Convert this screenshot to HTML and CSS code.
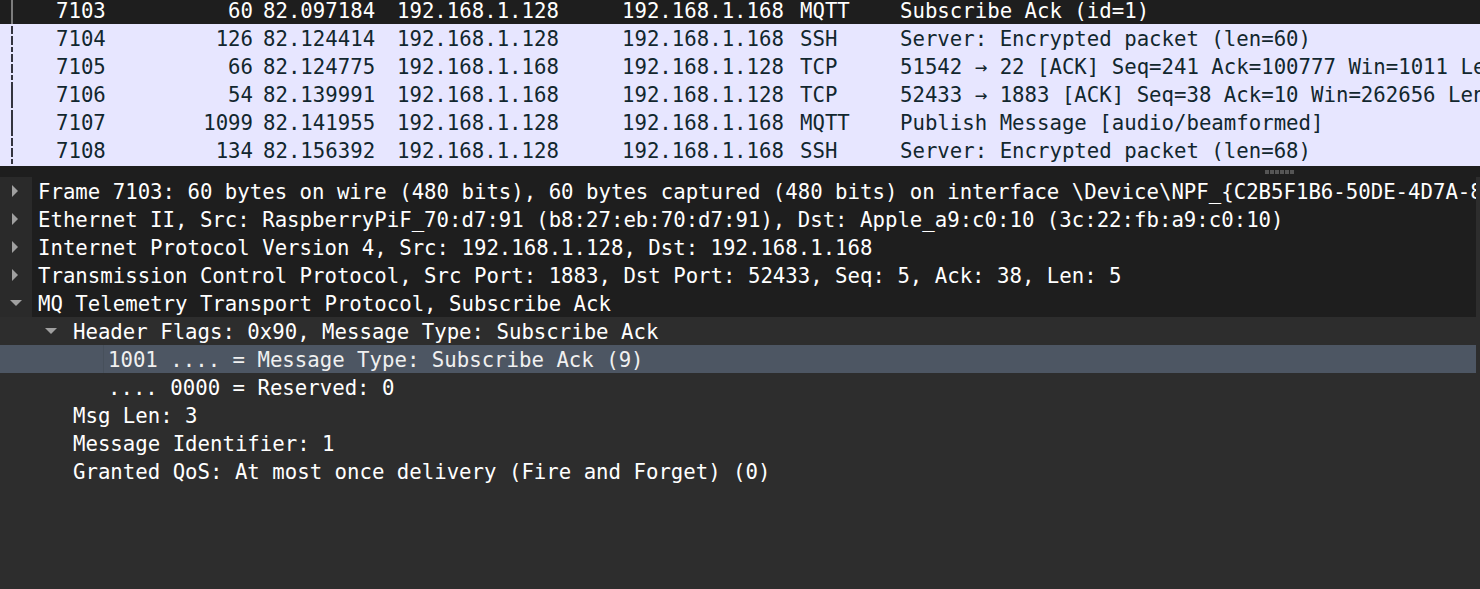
FILE: index.html
```html
<!DOCTYPE html>
<html>
<head>
<meta charset="utf-8">
<link rel="stylesheet" href="styles.css">
</head>
<body>
<div class="packets">
  <div class="plist">
    <div class="prow sel"><span class="rel"></span><span>7103</span><span class="len">60</span><span class="time">82.097184</span><span>192.168.1.128</span><span>192.168.1.168</span><span>MQTT</span><span class="info">Subscribe Ack (id=1)</span></div>
    <div class="prow tcp"><span class="rel dash"></span><span>7104</span><span class="len">126</span><span class="time">82.124414</span><span>192.168.1.128</span><span>192.168.1.168</span><span>SSH</span><span class="info">Server: Encrypted packet (len=60)</span></div>
    <div class="prow tcp"><span class="rel dash"></span><span>7105</span><span class="len">66</span><span class="time">82.124775</span><span>192.168.1.168</span><span>192.168.1.128</span><span>TCP</span><span class="info">51542 → 22 [ACK] Seq=241 Ack=100777 Win=1011 Len=0</span></div>
    <div class="prow tcp"><span class="rel"></span><span>7106</span><span class="len">54</span><span class="time">82.139991</span><span>192.168.1.168</span><span>192.168.1.128</span><span>TCP</span><span class="info">52433 → 1883 [ACK] Seq=38 Ack=10 Win=262656 Len=0</span></div>
    <div class="prow tcp"><span class="rel"></span><span>7107</span><span class="len">1099</span><span class="time">82.141955</span><span>192.168.1.128</span><span>192.168.1.168</span><span>MQTT</span><span class="info">Publish Message [audio/beamformed]</span></div>
    <div class="prow tcp"><span class="rel dash"></span><span>7108</span><span class="len">134</span><span class="time">82.156392</span><span>192.168.1.128</span><span>192.168.1.168</span><span>SSH</span><span class="info">Server: Encrypted packet (len=68)</span></div>
    <div class="prow tcp"><span class="rel"></span><span></span><span class="len"></span><span class="time"></span><span></span><span></span><span></span><span class="info"></span></div>
  </div>
</div>
<div class="splitter">
  <div class="grip"><i></i><i></i><i></i><i></i><i></i><i></i></div>
</div>
<div class="details">
  <div class="row top"><span class="twisty"><i class="tri right"></i></span><span class="label">Frame 7103: 60 bytes on wire (480 bits), 60 bytes captured (480 bits) on interface \Device\NPF_{C2B5F1B6-50DE-4D7A-8F2A-1C0E5B3D9A77}, id 0</span></div>
  <div class="row top"><span class="twisty"><i class="tri right"></i></span><span class="label">Ethernet II, Src: RaspberryPiF_70:d7:91 (b8:27:eb:70:d7:91), Dst: Apple_a9:c0:10 (3c:22:fb:a9:c0:10)</span></div>
  <div class="row top"><span class="twisty"><i class="tri right"></i></span><span class="label">Internet Protocol Version 4, Src: 192.168.1.128, Dst: 192.168.1.168</span></div>
  <div class="row top"><span class="twisty"><i class="tri right"></i></span><span class="label">Transmission Control Protocol, Src Port: 1883, Dst Port: 52433, Seq: 5, Ack: 38, Len: 5</span></div>
  <div class="row top"><span class="twisty"><i class="tri down"></i></span><span class="label">MQ Telemetry Transport Protocol, Subscribe Ack</span></div>
  <div class="row l1"><span class="twisty"><i class="tri down"></i></span><span class="label">Header Flags: 0x90, Message Type: Subscribe Ack</span></div>
  <div class="row l2 selected"><span class="twisty"></span><span class="label focus">1001 .... = Message Type: Subscribe Ack (9)</span></div>
  <div class="row l2"><span class="twisty"></span><span class="label">.... 0000 = Reserved: 0</span></div>
  <div class="row l1"><span class="twisty"></span><span class="label">Msg Len: 3</span></div>
  <div class="row l1"><span class="twisty"></span><span class="label">Message Identifier: 1</span></div>
  <div class="row l1"><span class="twisty"></span><span class="label">Granted QoS: At most once delivery (Fire and Forget) (0)</span></div>
</div>
</body>
</html>
```
FILE: styles.css
```css
html, body {
  margin: 0;
  padding: 0;
  height: 100%;
  overflow: hidden;
}
body {
  background: #2d2d2d;
  font-family: "DejaVu Sans Mono", "Liberation Mono", monospace;
  font-size: 20.7px;
  color: #ffffff;
}

/* packet list */
.packets {
  height: 166px;
  overflow: hidden;
  background: #e7e6ff;
}
.plist {
  margin-top: -4px;
}
.prow {
  display: grid;
  grid-template-columns: 56px 97px 100px 144px 225px 178px 100px 1fr;
  height: 28px;
  box-sizing: border-box;
  padding-top: 2px;
  line-height: 26px;
  white-space: nowrap;
}
.prow > span {
  overflow: hidden;
}
.prow .len {
  text-align: right;
}
.prow .time {
  padding-left: 10px;
}
.prow.sel {
  background: #1e1e1e;
  color: #ffffff;
}
.prow.tcp {
  background: #e7e6ff;
  color: #12272e;
}
.rel {
  position: relative;
}
.rel::before {
  content: "";
  position: absolute;
  left: 11px;
  top: -2px;
  bottom: 0;
  width: 2px;
  background: #34343f;
}
.prow.sel .rel::before {
  background: #7c7c7c;
}
.rel.dash::before {
  background: linear-gradient(to bottom,
    #34343f 0 10px, transparent 10px 12px,
    #34343f 12px 21px, transparent 21px 23px,
    #34343f 23px 28px);
}

/* splitter */
.splitter {
  height: 11px;
  background: #1e1e1e;
  display: flex;
  justify-content: flex-end;
  padding-right: 186px;
}
.grip {
  display: flex;
  gap: 1px;
  padding-top: 4px;
}
.grip i {
  display: block;
  width: 4px;
  height: 4px;
  background: #555555;
}

/* details tree */
.details {
  background: #2d2d2d;
}
.row {
  display: flex;
  align-items: center;
  height: 28px;
  white-space: nowrap;
  overflow: hidden;
  margin-right: 4px;
}
.row.top {
  background: #1e1e1e;
}
.row.top .twisty {
  background: #2a2a2a;
  align-self: stretch;
}
.row.l1 {
  padding-left: 35px;
}
.row.l2 {
  padding-left: 70px;
}
.twisty {
  flex: none;
  width: 32px;
  display: flex;
  align-items: center;
  justify-content: center;
  margin-right: 6px;
  margin-left: -4px;
  padding-left: 4px;
}
.label {
  line-height: 26px;
  padding-top: 2px;
}
.tri {
  display: block;
  width: 0;
  height: 0;
}
.tri.right {
  border-left: 6px solid #a0a0a0;
  border-top: 6px solid transparent;
  border-bottom: 6px solid transparent;
  margin-left: -2px;
}
.tri.down {
  border-top: 6px solid #a0a0a0;
  border-left: 6px solid transparent;
  border-right: 6px solid transparent;
}
.row.selected {
  background: #4d5663;
}
.label.focus {
  margin-left: -5px;
  padding-left: 4px;
  border-left: 1px solid #47505b;
  color: #f0f0f0;
}
```
